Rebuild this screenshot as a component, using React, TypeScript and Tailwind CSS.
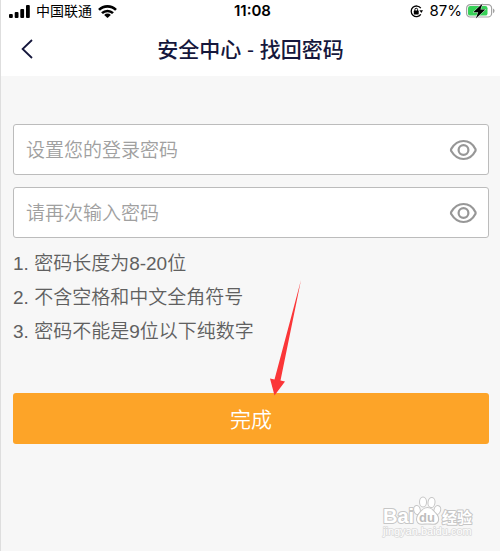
import { useState } from "react";

const rules = [
  "密码长度为8-20位",
  "不含空格和中文全角符号",
  "密码不能是9位以下纯数字",
];

function StatusBar() {
  return (
    <div className="grid h-[22px] grid-cols-3 items-center pl-2 pr-1 font-['Inter','Noto_Sans_CJK_SC',sans-serif] text-[15px] leading-[22px] text-black">
      <div className="flex items-center gap-1.5">
        <svg width="21" height="13" viewBox="0 0 21 13" aria-hidden="true">
          <rect x="0" y="9" width="3.8" height="4" rx="1" />
          <rect x="5.7" y="7" width="3.8" height="6" rx="1" />
          <rect x="11.3" y="4" width="3.8" height="9" rx="1" />
          <rect x="17" y="0" width="3.8" height="13" rx="1" />
        </svg>
        <span className="text-[14px]">中国联通</span>
        <svg width="19" height="13" viewBox="0 0 19 13" aria-hidden="true">
          <g fill="none" stroke="#000" strokeWidth="2.6">
            <path d="M1 4.9 A12 12 0 0 1 18 4.9" />
            <path d="M4 8.2 A7.8 7.8 0 0 1 15 8.2" />
          </g>
          <path d="M9.5 13 L6.2 9.9 A4.4 4.4 0 0 1 12.8 9.9 Z" />
        </svg>
      </div>
      <span className="text-center font-semibold">11:08</span>
      <div className="flex items-center justify-end">
        <svg className="mr-1.5" width="13" height="13" viewBox="0 0 13 13" aria-hidden="true">
          <path d="M10.8 3.2 A5.3 5.3 0 1 0 10.8 9.4" fill="none" stroke="#000" strokeWidth="1.3" />
          <path d="M9.4 5.2 H13 L11.3 8 Z" />
          <rect x="3.8" y="5.6" width="4.9" height="3.8" rx="0.6" />
          <path d="M4.9 6 V4.6 A1.3 1.3 0 0 1 7.6 4.6 V6" fill="none" stroke="#000" strokeWidth="1" />
        </svg>
        <span className="mr-1">87%</span>
        <svg width="30" height="16" viewBox="0 0 30 16" aria-hidden="true">
          <rect x="0.6" y="1.6" width="25" height="12.4" rx="3.6" fill="#fff" stroke="#a3a3a3" strokeWidth="1.2" />
          <rect x="2" y="3" width="19.5" height="9.6" rx="2.2" fill="#37d158" />
          <path d="M27 5.4 A2.6 2.6 0 0 1 27 10.2 Z" fill="#a3a3a3" />
          <path
            d="M16.6 0.4 L7.2 9.2 H12.2 L9.8 15.4 L19.4 6.6 H14.4 Z"
            stroke="#fff"
            strokeWidth="0.8"
            paintOrder="stroke"
          />
        </svg>
      </div>
    </div>
  );
}

function EyeIcon() {
  return (
    <svg width="28" height="22" viewBox="0 0 28 22" fill="none" stroke="#979797" strokeWidth="2.2" aria-hidden="true">
      <path
        d="M2.4 12.3 Q1.6 11 2.4 9.7 C5.4 4.7 9.4 2 14.5 2 C19.6 2 23.6 4.7 26.2 9.7 Q27 11 26.2 12.3 C23.6 17.3 19.6 20 14.5 20 C9.4 20 5.4 17.3 2.4 12.3 Z"
      />
      <circle cx="14.5" cy="11" r="4.9" />
    </svg>
  );
}

function PasswordField({ label }: { label: string }) {
  const [visible, setVisible] = useState(false);

  return (
    <div className="flex h-[51px] items-center rounded-[3px] border border-[#bcbcbc] bg-white pl-3 pr-[11px]">
      <input
        type={visible ? "text" : "password"}
        aria-label={label}
        placeholder={label}
        className="min-w-0 flex-1 bg-transparent pt-1 text-[19px] font-[350] text-[#666] outline-none placeholder:text-[#a0a0a0]"
      />
      <button type="button" aria-label="显示密码" onClick={() => setVisible(!visible)}>
        <EyeIcon />
      </button>
    </div>
  );
}

function Arrow() {
  return (
    <svg
      className="pointer-events-none absolute -top-[113px] left-1/2 ml-[18px]"
      width="34"
      height="116"
      viewBox="0 0 34 116"
      fill="#fb3638"
      aria-hidden="true"
    >
      <path d="M32 0 L11.5 100.5 L16 101.5 L5.5 115.5 L1 98.5 L5.5 99.5 Z" />
    </svg>
  );
}

function Watermark() {
  return (
    <svg
      className="pointer-events-none absolute bottom-2 right-[25px]"
      width="94"
      height="50"
      viewBox="0 0 94 50"
      fill="#fff"
      stroke="#c6c6c6"
      strokeWidth="2"
      strokeLinejoin="round"
      paintOrder="stroke"
      aria-label="Baidu 经验"
    >
      <g fontFamily="'Liberation Sans', 'Noto Sans CJK SC', sans-serif" fontWeight="700">
        <ellipse cx="36" cy="17" rx="2.8" ry="4" transform="rotate(-12 36 17)" />
        <ellipse cx="42" cy="9" rx="3" ry="4.6" />
        <ellipse cx="50.5" cy="9.5" rx="3" ry="4.6" transform="rotate(8 50.5 9.5)" />
        <ellipse cx="56.3" cy="17" rx="2.8" ry="4" transform="rotate(16 56.3 17)" />
        <path d="M46.5 15 C50.5 15 52 18 54.5 20.5 C59 25 57.5 31 52 30.8 C48 30.4 45 30.4 41 30.8 C35.5 31 34.5 25 38.5 20.5 C41 18 42.5 15 46.5 15 Z" />
        <text x="38" y="29" fontSize="13" fill="#bdbdbd" stroke="none">du</text>
        <text x="2" y="30" fontSize="20">Bai</text>
        <text x="61" y="30" fontSize="15">经验</text>
        <text x="2" y="42" fontSize="11" strokeWidth="1.6" stroke="#dadada" fontWeight="400">jingyan.baidu.com</text>
      </g>
    </svg>
  );
}

export default function App() {
  return (
    <main className="relative min-h-screen border-l border-[#dedede] bg-[#f7f7f7] font-['Liberation_Sans','Noto_Sans_CJK_SC',sans-serif]">
      <header className="bg-white">
        <StatusBar />
        <div className="grid h-[54px] grid-cols-[52px_1fr_52px] items-center text-[#15173c]">
          <button type="button" aria-label="返回" className="flex h-full items-center justify-center">
            <svg width="12" height="20" viewBox="0 0 12 20" fill="none" stroke="currentColor" strokeWidth="1.8" aria-hidden="true">
              <path d="M11 1 L1.6 10 L11 19" />
            </svg>
          </button>
          <h1 className="pt-0.5 text-center text-[21px] font-medium">安全中心 - 找回密码</h1>
        </div>
      </header>

      <form className="px-3 pt-12 pr-[11px]" onSubmit={(e) => e.preventDefault()}>
        <div className="space-y-3">
          <PasswordField label="设置您的登录密码" />
          <PasswordField label="请再次输入密码" />
        </div>

        <ol className="mt-[9px] list-inside list-decimal text-[19px] leading-[34px] font-[350] text-[#606060]">
          {rules.map((rule) => (
            <li key={rule}>{rule}</li>
          ))}
        </ol>

        <div className="relative mt-11">
          <button type="submit" className="h-[51px] w-full rounded-[3px] bg-[#fda428] pt-0.5 text-[21px] font-[350] text-white">
            完成
          </button>
          <Arrow />
        </div>
      </form>

      <Watermark />
    </main>
  );
}
